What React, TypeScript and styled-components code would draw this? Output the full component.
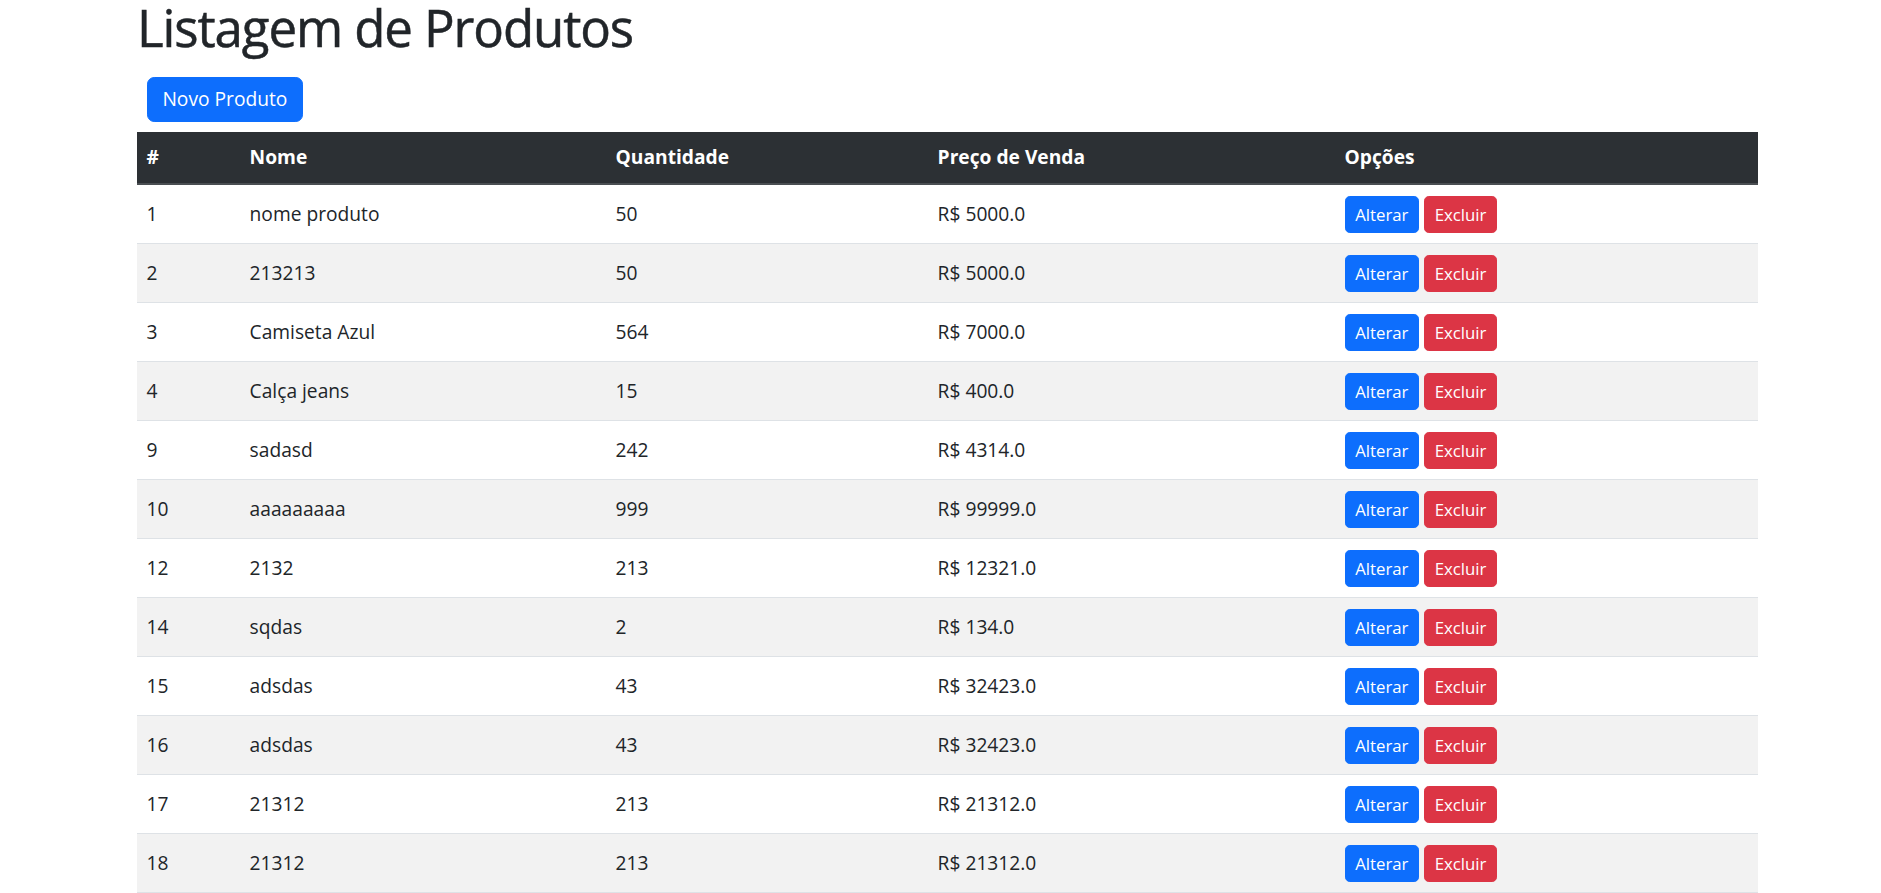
import React from "react";
import styled, { createGlobalStyle } from "styled-components";

const GlobalStyle = createGlobalStyle`
  html, body { margin: 0; padding: 0; background: #fff; }
  body {
    font-family: "Open Sans", "Noto Sans", sans-serif;
    font-size: 19.2px;
    line-height: 1.5;
    color: #212529;
  }
  * { box-sizing: border-box; }
`;

const Page = styled.main`
  margin-left: 137px;
  width: 1621px;
`;

const Title = styled.h1`
  margin: -3.75px 0 0 0;
  font-size: 51px;
  font-weight: 500;
  line-height: 62px;
  letter-spacing: -1.1px;
  -webkit-text-stroke: 0.5px #212529;
`;

const Toolbar = styled.div`
  display: flex;
  padding-left: 10px;
  margin-top: 18.75px;
  margin-bottom: 10px;
`;

const Button = styled.button<{ $variant: "primary" | "danger"; $small?: boolean }>`
  font-family: inherit;
  border: 1.2px solid ${(p) => (p.$variant === "primary" ? "#0d6efd" : "#dc3545")};
  background: ${(p) => (p.$variant === "primary" ? "#0d6efd" : "#dc3545")};
  color: #fff;
  cursor: pointer;
  font-size: ${(p) => (p.$small ? "16.8px" : "19.2px")};
  line-height: 1.5;
  padding: ${(p) => (p.$small ? "5px 9.6px" : "7.2px 14.4px")};
  border-radius: ${(p) => (p.$small ? "4.8px" : "7.2px")};
`;

const Table = styled.table`
  width: 100%;
  border-collapse: collapse;
  table-layout: fixed;
`;

const HeadRow = styled.tr`
  background: #2c3034;
  color: #fff;
  border-bottom: 2px solid #4a4e52;
`;

const Th = styled.th`
  text-align: left;
  font-weight: 700;
  padding: 9.6px;
  height: 52px;
  vertical-align: middle;
`;

const Row = styled.tr<{ $striped: boolean }>`
  background: ${(p) => (p.$striped ? "#f2f2f2" : "#fff")};
  border-bottom: 1px solid #dee2e6;
`;

const Td = styled.td`
  padding: 9.6px;
  vertical-align: middle;
  height: 59px;
`;

const Actions = styled.div`
  display: flex;
  align-items: center;
  gap: 5px;
  height: 38.8px;
`;

const widths = [103, 366, 322, 407, 423];

const produtos: [number, string, number, string][] = [
  [1, "nome produto", 50, "5000.0"],
  [2, "213213", 50, "5000.0"],
  [3, "Camiseta Azul", 564, "7000.0"],
  [4, "Calça jeans", 15, "400.0"],
  [9, "sadasd", 242, "4314.0"],
  [10, "aaaaaaaaa", 999, "99999.0"],
  [12, "2132", 213, "12321.0"],
  [14, "sqdas", 2, "134.0"],
  [15, "adsdas", 43, "32423.0"],
  [16, "adsdas", 43, "32423.0"],
  [17, "21312", 213, "21312.0"],
  [18, "21312", 213, "21312.0"],
];

export default function App() {
  return (
    <>
      <GlobalStyle />
      <Page>
        <Title>Listagem de Produtos</Title>
        <Toolbar>
          <Button $variant="primary">Novo Produto</Button>
        </Toolbar>
        <Table>
          <colgroup>
            {widths.map((w, i) => (
              <col key={i} style={{ width: w }} />
            ))}
          </colgroup>
          <thead>
            <HeadRow>
              <Th>#</Th>
              <Th>Nome</Th>
              <Th>Quantidade</Th>
              <Th>Preço de Venda</Th>
              <Th>Opções</Th>
            </HeadRow>
          </thead>
          <tbody>
            {produtos.map(([id, nome, qtd, preco], i) => (
              <Row key={id} $striped={i % 2 === 1}>
                <Td>{id}</Td>
                <Td>{nome}</Td>
                <Td>{qtd}</Td>
                <Td>R$ {preco}</Td>
                <Td>
                  <Actions>
                    <Button $variant="primary" $small>Alterar</Button>
                    <Button $variant="danger" $small>Excluir</Button>
                  </Actions>
                </Td>
              </Row>
            ))}
          </tbody>
        </Table>
      </Page>
    </>
  );
}
